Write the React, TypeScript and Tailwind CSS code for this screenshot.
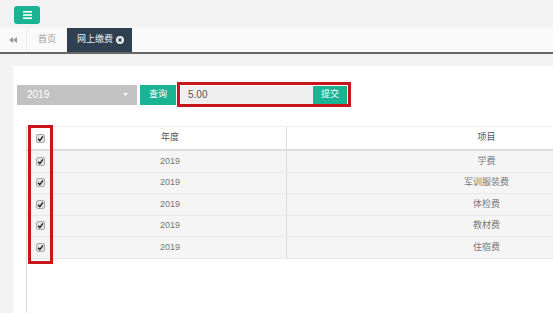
const rows = [
  { year: '2019', item: '学费' },
  { year: '2019', item: '军训服装费' },
  { year: '2019', item: '体检费' },
  { year: '2019', item: '教材费' },
  { year: '2019', item: '住宿费' },
]

function Check() {
  return (
    <span className="flex items-center justify-center w-[9px] h-[9px] rounded-[2px] bg-[#e2e2e2] border border-[#aaa]">
      <svg width="7" height="7" viewBox="0 0 10 10">
        <path d="M1.5 5.5 L4 8 L8.5 2" stroke="#222" strokeWidth="2" fill="none" />
      </svg>
    </span>
  )
}

export default function App() {
  return (
    <div
      className="relative w-[553px] h-[313px] overflow-hidden bg-[#f3f3f4] flex flex-col"
      style={{ fontFamily: '"Liberation Sans", "Noto Sans CJK SC", sans-serif' }}
    >
      {/* 顶部按钮 */}
      <div className="h-[28px] pl-[14px] pt-[6px]">
        <button className="w-[26px] h-[18px] rounded-[3px] bg-[#1ab394] flex items-center justify-center">
          <svg width="9" height="8" viewBox="0 0 9 8">
            <rect x="0" y="0" width="9" height="1.6" fill="#fff" />
            <rect x="0" y="3.2" width="9" height="1.6" fill="#fff" />
            <rect x="0" y="6.4" width="9" height="1.6" fill="#fff" />
          </svg>
        </button>
      </div>

      {/* 标签栏 */}
      <div className="h-[26px] bg-[#fafafa] border-b-2 border-[#666] flex text-[9px]">
        <div className="w-[27px] flex items-center justify-center border-r border-[#eee]">
          <svg width="8" height="6" viewBox="0 0 8 6">
            <path d="M0 3 L4 0 L4 6 Z M4 3 L8 0 L8 6 Z" fill="#999" />
          </svg>
        </div>
        <div className="w-[40px] flex items-center justify-center text-[#999]">首页</div>
        <div className="w-[65px] bg-[#2f4050] text-[#e8ecef] flex items-center pl-[10px] gap-[3px]">
          <span>网上缴费</span>
          <svg width="8" height="8" viewBox="0 0 10 10">
            <circle cx="5" cy="5" r="5" fill="#e8ecef" />
            <path d="M3.2 3.2 L6.8 6.8 M6.8 3.2 L3.2 6.8" stroke="#2f4050" strokeWidth="1.6" />
          </svg>
        </div>
      </div>

      {/* 内容面板 */}
      <div className="flex-1 ml-[13px] mt-[12px] bg-white flex flex-col">
        <div className="flex items-center pl-[4px] mt-[16px] text-[9px]">
          <div className="w-[120px] h-[20px] bg-[#c2c2c2] text-white flex items-center justify-between pl-[10px] pr-[9px] text-[10px]">
            <span>2019</span>
            <svg width="5" height="3" viewBox="0 0 5 3">
              <path d="M0 0 L5 0 L2.5 3 Z" fill="#fff" />
            </svg>
          </div>
          <button className="ml-[3px] w-[36px] h-[20px] bg-[#1ab394] text-white text-[9px]">查询</button>
          <div className="ml-[1px] w-[174px] h-[25px] border-[3px] border-[#c8161d] flex items-center pl-[1px] pr-[1px]">
            <div className="w-[132px] h-[18px] bg-[#efefef] text-[#555] flex items-center pl-[7px] text-[10px]">5.00</div>
            <button className="w-[34px] h-[18px] bg-[#1ab394] text-white text-[9px]">提交</button>
          </div>
        </div>

        {/* 表格 */}
        <div className="relative flex-1 mt-[19px] ml-[13px] w-[660px] border-l border-[#ddd] text-[9px]">
          <div className="h-[25px] flex border-t border-[#eee] border-b-2 border-b-[#ddd] bg-white text-[#555]">
            <div className="w-[27px] flex items-center justify-center">
              <Check />
            </div>
            <div className="w-[233px] flex items-center justify-center border-r border-[#ddd]">年度</div>
            <div className="flex-1 flex items-center justify-center">项目</div>
          </div>
          {rows.map((r, i) => (
            <div key={i} className="h-[21.5px] flex bg-[#f5f5f5] border-b border-[#e8e8e8] text-[#777]">
              <div className="w-[27px] flex items-center justify-center">
                <Check />
              </div>
              <div className="w-[233px] flex items-center justify-center border-r border-[#ddd]">{r.year}</div>
              <div className="flex-1 flex items-center justify-center">{r.item}</div>
            </div>
          ))}
          {/* 红框标注 */}
          <div className="absolute left-[1px] top-[-1px] w-[25px] h-[139px] border-[3px] border-[#c8161d]" />
        </div>
      </div>
    </div>
  )
}
